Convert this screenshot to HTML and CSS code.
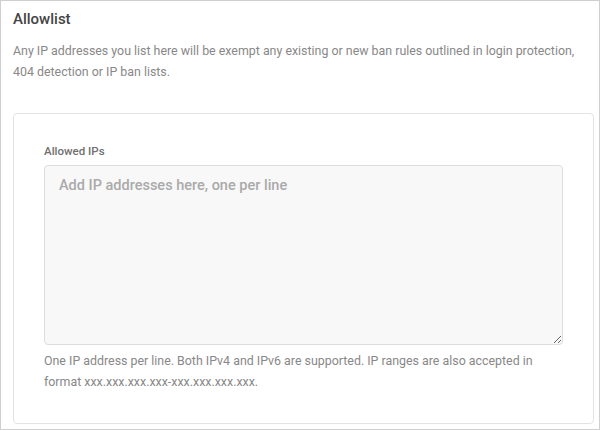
FILE: index.html
```html
<!DOCTYPE html>
<html lang="en">
<head>
  <meta charset="UTF-8" />
  <meta name="viewport" content="width=device-width, initial-scale=1.0"/>
  <title>Allowlist</title>
  <link rel="stylesheet" href="styles.css">
</head>
<body>
  <div class="panel">
    <h2 class="panel-title">Allowlist</h2>
    <p class="panel-desc">Any IP addresses you list here will be exempt any existing or new ban rules outlined in login protection, 404 detection or IP ban lists.</p>

    <div class="box">
      <label class="field-label" for="allowedIps">Allowed IPs</label>
      <textarea id="allowedIps" class="field-input" placeholder="Add IP addresses here, one per line"></textarea>
      <p class="field-help">One IP address per line. Both IPv4 and IPv6 are supported. IP ranges are also accepted in format xxx.xxx.xxx.xxx-xxx.xxx.xxx.xxx.</p>
    </div>
  </div>
</body>
</html>
```

FILE: styles.css
```css
html,
body {
  margin: 0;
  padding: 0;
  background-color: #fff;
}
body {
  font-family: Roboto, 'Liberation Sans', sans-serif;
  color: #333;
}
.panel {
  width: 600px;
  height: 430px;
  box-sizing: border-box;
  border: 1px solid #cfcfcf;
  padding: 6px 5px 0 12px;
  overflow: hidden;
}
.panel-title {
  margin: 0;
  font-size: 15px;
  line-height: 24px;
  font-weight: 500;
  color: #444;
}
.panel-desc {
  margin: 9px 0 0;
  font-size: 12.4px;
  line-height: 21px;
  color: #888;
}
.box {
  margin-top: 31px;
  border: 1px solid #e3e3e3;
  border-radius: 4px;
  padding: 29px 30px 31px;
}
.field-label {
  display: block;
  font-size: 11.5px;
  line-height: 16px;
  font-weight: 500;
  color: #707070;
}
.field-input {
  display: block;
  width: 100%;
  height: 180px;
  box-sizing: border-box;
  margin-top: 6px;
  padding: 10px 14px;
  border: 1px solid #ddd;
  border-radius: 4px;
  background-color: #f8f8f8;
  font-family: Roboto, 'Liberation Sans', sans-serif;
  font-size: 14.5px;
  line-height: 20px;
  font-weight: 500;
  color: #333;
  resize: vertical;
}
.field-input::placeholder {
  color: #aaa;
}
.field-help {
  margin: 5px 0 0;
  font-size: 12.4px;
  line-height: 21px;
  color: #888;
}
```
